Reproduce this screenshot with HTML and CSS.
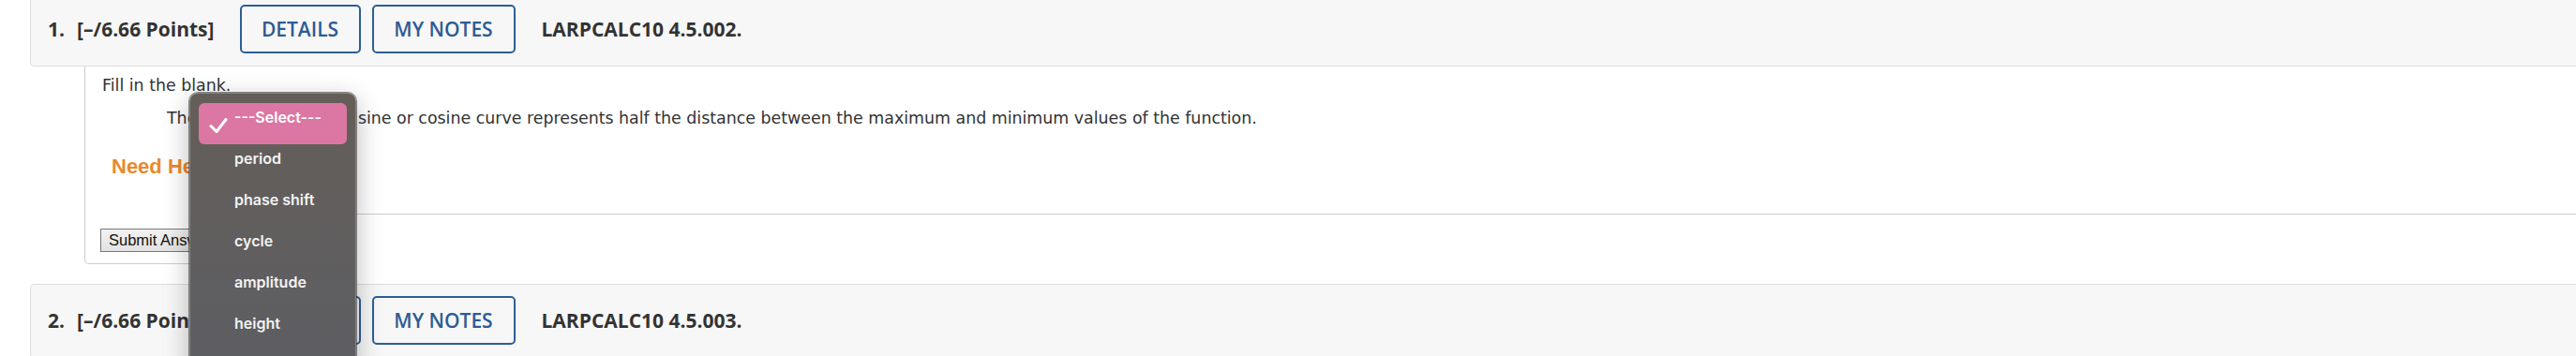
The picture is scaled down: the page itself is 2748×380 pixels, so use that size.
FILE: index.html
```html
<!DOCTYPE html>
<html lang="en">
<head>
<meta charset="utf-8">
<title>Question</title>
<link rel="stylesheet" href="styles.css">
</head>
<body>
<div class="page">
  <div class="qhead">
    <span class="qnum">1.</span>
    <span class="points">[–/6.66 Points]</span>
    <span class="hbtn details">DETAILS</span>
    <span class="hbtn notes">MY NOTES</span>
    <span class="qid">LARPCALC10 4.5.002.</span>
  </div>
  <div class="qbody">
    <p class="prompt">Fill in the blank.</p>
    <p class="sentence">The <span class="blank"></span> of a sine or cosine curve represents half the distance between the maximum and minimum values of the function.</p>
    <p class="help">Need Help?</p>
    <div class="divider"></div>
    <div class="submit-row"><span class="submit">Submit Answer</span></div>
  </div>
  <div class="qhead second">
    <span class="qnum">2.</span>
    <span class="points">[–/6.66 Points]</span>
    <span class="hbtn details">DETAILS</span>
    <span class="hbtn notes">MY NOTES</span>
    <span class="qid">LARPCALC10 4.5.003.</span>
  </div>

  <div class="menu">
    <div class="item selected">
      <svg class="check" width="20" height="16" viewBox="0 0 20 16"><polyline points="2,8.5 8,14.5 18,1.5" fill="none" stroke="#fff" stroke-width="3" stroke-linecap="round" stroke-linejoin="round"/></svg>
      <span>---Select---</span>
    </div>
    <div class="item"><span>period</span></div>
    <div class="item"><span>phase shift</span></div>
    <div class="item"><span>cycle</span></div>
    <div class="item"><span>amplitude</span></div>
    <div class="item"><span>height</span></div>
  </div>
</div>
</body>
</html>
```

FILE: styles.css
```css
html, body {
  margin: 0;
  padding: 0;
  background: #ffffff;
  overflow: hidden;
}

.page {
  position: relative;
  margin-top: -8px;
  padding-left: 32px;
  width: 2800px;
}

.qhead {
  display: flex;
  align-items: center;
  height: 52px;
  padding: 12px 0 13px 18px;
  background: #f7f7f7;
  border: 1px solid #dddddd;
  border-radius: 4px;
  font-family: "Open Sans", "DejaVu Sans", sans-serif;
  font-size: 21px;
  font-weight: 700;
  color: #333333;
}

.qhead.second {
  margin-top: 21px;
}

.qnum {
  margin-right: 13px;
}

.points {
  margin-right: 27px;
}

.hbtn {
  box-sizing: border-box;
  display: flex;
  align-items: center;
  justify-content: center;
  height: 52px;
  border: 2px solid #2d5e96;
  border-radius: 5px;
  color: #2b5c95;
  font-weight: 600;
}

.details {
  width: 129px;
  margin-right: 12px;
}

.notes {
  width: 153px;
  margin-right: 28px;
}

.qbody {
  box-sizing: border-box;
  width: 240px;
  margin-left: 58px;
  border-left: 1px solid #cccccc;
  border-bottom: 1px solid #cccccc;
  border-bottom-left-radius: 5px;
  white-space: nowrap;
  font-family: "DejaVu Sans", Verdana, sans-serif;
  font-size: 17.4px;
  color: #333333;
}

.prompt {
  margin: 0;
  padding: 8px 0 0 18px;
  line-height: 24px;
}

.sentence {
  margin: 11px 0 0 87px;
  line-height: 24px;
}

.blank {
  display: inline-block;
  width: 122px;
  height: 20px;
  vertical-align: middle;
}

.help {
  margin: 25px 0 0 28px;
  line-height: 30px;
  font-family: "Liberation Sans", Arial, sans-serif;
  font-size: 22px;
  font-weight: 700;
  color: #e8892f;
}

.divider {
  margin: 35px 0 0 200px;
  width: 2600px;
  height: 1px;
  background: #cccccc;
}

.submit-row {
  padding: 15px 0 12px 16px;
}

.submit {
  box-sizing: border-box;
  display: inline-flex;
  align-items: center;
  height: 25px;
  padding: 0 8px;
  border: 1px solid #767676;
  background: linear-gradient(#f2f2f2, #e2e2e2);
  font-family: "Liberation Sans", Arial, sans-serif;
  font-size: 16.5px;
  color: #111111;
}

.menu {
  position: absolute;
  left: 202px;
  top: 107px;
  box-sizing: border-box;
  width: 178px;
  height: 300px;
  padding: 10px 9px;
  border: 1px solid #8a8581;
  border-radius: 9px;
  background: linear-gradient(#645e59, #5d5e63);
  box-shadow: 0 0 0 1px rgba(40, 40, 40, 0.55), 0 8px 28px rgba(0, 0, 0, 0.28);
  font-family: "Inter", "Liberation Sans", Arial, sans-serif;
  font-size: 16px;
  font-weight: 600;
  color: #f3f3f3;
}

.item {
  position: relative;
  height: 30px;
  padding: 0 0 14px 38px;
  line-height: 30px;
}

.item.selected {
  background: #dc76a3;
  border-radius: 6px;
  color: #ffffff;
}

.check {
  position: absolute;
  left: 11px;
  top: 16px;
}
```
